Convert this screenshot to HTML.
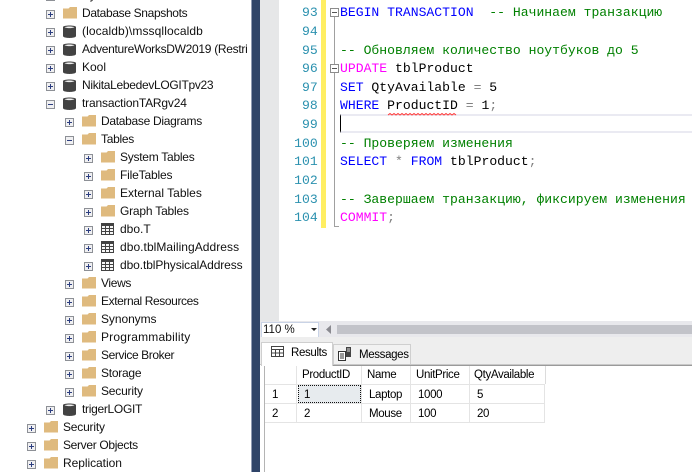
<!DOCTYPE html>
<html><head><meta charset="utf-8">
<style>
html,body{margin:0;padding:0;background:#fff}
#p{position:relative;width:692px;height:472px;overflow:hidden;background:#fff;font-family:"Liberation Sans",sans-serif;font-size:12px;color:#111}
#p div,#p span.a{position:absolute;white-space:pre}
.t{height:18px;line-height:18px}
.c{font-family:"Liberation Mono",monospace;font-size:13.1px;height:18px;line-height:18px;color:#000;left:340px;margin-top:1px}
.n{font-family:"Liberation Mono",monospace;font-size:13.1px;height:18px;line-height:18px;color:#2b91af;left:0;text-align:right;width:317.7px;margin-top:1px}
.k{color:#0000ff}.m{color:#ff00ff}.g{color:#008000}.o{color:#808080}
.h{font-size:11.5px;height:18px;line-height:18px;letter-spacing:-.35px;color:#000}
svg{position:absolute;overflow:visible}
</style></head><body><div id="p">
<svg width="0" height="0" style="left:0;top:0">
<defs>
<g id="pl" transform="translate(0,1)"><rect x=".5" y=".5" width="8" height="8" fill="#f0f0f2" stroke="#8d9096"/><path d="M2 4.5h5M4.5 2v5" stroke="#2c3e80" fill="none"/></g>
<g id="mi" transform="translate(0,1)"><rect x=".5" y=".5" width="8" height="8" fill="#f0f0f2" stroke="#8d9096"/><path d="M2 4.5h5" stroke="#2c3e80" fill="none"/></g>
<g id="fo"><path d="M0 2.5h5.5l1.5-1.5h7v11.5H0z" fill="#dfba7e"/></g>
<g id="db"><path d="M0 3C0 1 13 1 13 3V12C13 14.6 0 14.6 0 12z" fill="#424242"/><path d="M1.6 3.2C3.5 2.2 9.5 2.2 11.4 3.2 9.5 4.4 3.5 4.4 1.6 3.2z" fill="#f0f0f0"/></g>
<g id="tb"><rect x="0" y="0" width="13" height="12" fill="#424242"/><path d="M1 3h3v2H1zM5 3h3v2H5zM9 3h3v2H9zM1 6h3v2H1zM5 6h3v2H5zM9 6h3v2H9zM1 9h3v2H1zM5 9h3v2H5zM9 9h3v2H9z" fill="#f6f6f6"/></g>
</defs></svg>

<!-- tree: top remnant -->
<svg style="left:46px;top:-9px" width="9" height="9"><use href="#pl"/></svg>
<div class="t" style="left:82px;top:-14px;letter-spacing:-.3px">System Databases</div>

<svg style="left:46px;top:9px" width="9" height="9"><use href="#pl"/></svg><svg style="left:63px;top:6px" width="14" height="14"><use href="#fo"/></svg><div class="t" style="left:82px;top:4px;letter-spacing:-.34px">Database Snapshots</div>
<svg style="left:46px;top:27px" width="9" height="9"><use href="#pl"/></svg><svg style="left:63px;top:24px" width="14" height="14"><use href="#db"/></svg><div class="t" style="left:82px;top:22px;letter-spacing:.1px">(localdb)\mssqllocaldb</div>
<svg style="left:46px;top:45px" width="9" height="9"><use href="#pl"/></svg><svg style="left:63px;top:42px" width="14" height="14"><use href="#db"/></svg><div class="t" style="left:82px;top:40px;width:168px;overflow:hidden;letter-spacing:-.3px">AdventureWorksDW2019 (Restri</div>
<svg style="left:46px;top:63px" width="9" height="9"><use href="#pl"/></svg><svg style="left:63px;top:60px" width="14" height="14"><use href="#db"/></svg><div class="t" style="left:82px;top:58px">Kool</div>
<svg style="left:46px;top:81px" width="9" height="9"><use href="#pl"/></svg><svg style="left:63px;top:78px" width="14" height="14"><use href="#db"/></svg><div class="t" style="left:82px;top:76px;letter-spacing:-.31px">NikitaLebedevLOGITpv23</div>
<svg style="left:46px;top:99px" width="9" height="9"><use href="#mi"/></svg><svg style="left:63px;top:96px" width="14" height="14"><use href="#db"/></svg><div class="t" style="left:82px;top:94px;letter-spacing:-.17px">transactionTARgv24</div>

<svg style="left:65px;top:117px" width="9" height="9"><use href="#pl"/></svg><svg style="left:82px;top:114px" width="14" height="14"><use href="#fo"/></svg><div class="t" style="left:101px;top:112px;letter-spacing:-.3px">Database Diagrams</div>
<svg style="left:65px;top:135px" width="9" height="9"><use href="#mi"/></svg><svg style="left:82px;top:132px" width="14" height="14"><use href="#fo"/></svg><div class="t" style="left:101px;top:130px;letter-spacing:-.3px">Tables</div>

<svg style="left:84px;top:153px" width="9" height="9"><use href="#pl"/></svg><svg style="left:101px;top:150px" width="14" height="14"><use href="#fo"/></svg><div class="t" style="left:120px;top:148px;letter-spacing:-.26px">System Tables</div>
<svg style="left:84px;top:171px" width="9" height="9"><use href="#pl"/></svg><svg style="left:101px;top:168px" width="14" height="14"><use href="#fo"/></svg><div class="t" style="left:120px;top:166px;letter-spacing:-.17px">FileTables</div>
<svg style="left:84px;top:189px" width="9" height="9"><use href="#pl"/></svg><svg style="left:101px;top:186px" width="14" height="14"><use href="#fo"/></svg><div class="t" style="left:120px;top:184px">External Tables</div>
<svg style="left:84px;top:207px" width="9" height="9"><use href="#pl"/></svg><svg style="left:101px;top:204px" width="14" height="14"><use href="#fo"/></svg><div class="t" style="left:120px;top:202px;letter-spacing:-.2px">Graph Tables</div>
<svg style="left:84px;top:225px" width="9" height="9"><use href="#pl"/></svg><svg style="left:101px;top:223px" width="13" height="12"><use href="#tb"/></svg><div class="t" style="left:120px;top:220px">dbo.T</div>
<svg style="left:84px;top:243px" width="9" height="9"><use href="#pl"/></svg><svg style="left:101px;top:241px" width="13" height="12"><use href="#tb"/></svg><div class="t" style="left:120px;top:238px;letter-spacing:.05px">dbo.tblMailingAddress</div>
<svg style="left:84px;top:261px" width="9" height="9"><use href="#pl"/></svg><svg style="left:101px;top:259px" width="13" height="12"><use href="#tb"/></svg><div class="t" style="left:120px;top:256px;letter-spacing:-.1px">dbo.tblPhysicalAddress</div>

<svg style="left:65px;top:279px" width="9" height="9"><use href="#pl"/></svg><svg style="left:82px;top:276px" width="14" height="14"><use href="#fo"/></svg><div class="t" style="left:101px;top:274px;letter-spacing:-.35px">Views</div>
<svg style="left:65px;top:297px" width="9" height="9"><use href="#pl"/></svg><svg style="left:82px;top:294px" width="14" height="14"><use href="#fo"/></svg><div class="t" style="left:101px;top:292px;letter-spacing:-.4px">External Resources</div>
<svg style="left:65px;top:315px" width="9" height="9"><use href="#pl"/></svg><svg style="left:82px;top:312px" width="14" height="14"><use href="#fo"/></svg><div class="t" style="left:101px;top:310px;letter-spacing:-.07px">Synonyms</div>
<svg style="left:65px;top:333px" width="9" height="9"><use href="#pl"/></svg><svg style="left:82px;top:330px" width="14" height="14"><use href="#fo"/></svg><div class="t" style="left:101px;top:328px;letter-spacing:.18px">Programmability</div>
<svg style="left:65px;top:351px" width="9" height="9"><use href="#pl"/></svg><svg style="left:82px;top:348px" width="14" height="14"><use href="#fo"/></svg><div class="t" style="left:101px;top:346px;letter-spacing:-.4px">Service Broker</div>
<svg style="left:65px;top:369px" width="9" height="9"><use href="#pl"/></svg><svg style="left:82px;top:366px" width="14" height="14"><use href="#fo"/></svg><div class="t" style="left:101px;top:364px;letter-spacing:-.25px">Storage</div>
<svg style="left:65px;top:387px" width="9" height="9"><use href="#pl"/></svg><svg style="left:82px;top:384px" width="14" height="14"><use href="#fo"/></svg><div class="t" style="left:101px;top:382px;letter-spacing:-.2px">Security</div>

<svg style="left:46px;top:405px" width="9" height="9"><use href="#pl"/></svg><svg style="left:63px;top:402px" width="14" height="14"><use href="#db"/></svg><div class="t" style="left:82px;top:400px;letter-spacing:-.3px">trigerLOGIT</div>

<svg style="left:27px;top:423px" width="9" height="9"><use href="#pl"/></svg><svg style="left:44px;top:420px" width="14" height="14"><use href="#fo"/></svg><div class="t" style="left:63px;top:418px;letter-spacing:-.2px">Security</div>
<svg style="left:27px;top:441px" width="9" height="9"><use href="#pl"/></svg><svg style="left:44px;top:438px" width="14" height="14"><use href="#fo"/></svg><div class="t" style="left:63px;top:436px;letter-spacing:-.33px">Server Objects</div>
<svg style="left:27px;top:459px" width="9" height="9"><use href="#pl"/></svg><svg style="left:44px;top:456px" width="14" height="14"><use href="#fo"/></svg><div class="t" style="left:63px;top:454px;letter-spacing:-.05px">Replication</div>

<!-- splitter -->
<div style="left:251px;top:0;width:1px;height:472px;background:#8f9bb3"></div>
<div style="left:252px;top:0;width:8px;height:472px;background:#2f4468"></div>
<!-- editor margin -->
<div style="left:260px;top:0;width:19px;height:321px;background:#e6e7e8"></div>
<div style="left:321px;top:0;width:5px;height:228px;background:#ffee62"></div>

<div class="n" style="top:3px">93</div>
<div class="n" style="top:22px">94</div>
<div class="n" style="top:41px">95</div>
<div class="n" style="top:59px">96</div>
<div class="n" style="top:78px">97</div>
<div class="n" style="top:96px">98</div>
<div class="n" style="top:115px">99</div>
<div class="n" style="top:134px">100</div>
<div class="n" style="top:152px">101</div>
<div class="n" style="top:171px">102</div>
<div class="n" style="top:190px">103</div>
<div class="n" style="top:208px">104</div>

<!-- fold markers -->
<div style="left:330px;top:8px;width:9px;height:9px;box-sizing:border-box;border:1px solid #8c8c8c;background:#fff"></div>
<div style="left:332px;top:12px;width:5px;height:1px;background:#555"></div>
<div style="left:334px;top:17px;width:1px;height:47px;background:#a0a0a0"></div>
<div style="left:330px;top:64px;width:9px;height:9px;box-sizing:border-box;border:1px solid #8c8c8c;background:#fff"></div>
<div style="left:332px;top:68px;width:5px;height:1px;background:#555"></div>
<div style="left:334px;top:73px;width:1px;height:154px;background:#a0a0a0"></div>
<div style="left:334px;top:226px;width:5px;height:1px;background:#a0a0a0"></div>

<!-- current line -->
<div style="left:340px;top:114px;width:352px;height:19px;box-sizing:border-box;border-top:2px solid #eaeaf2;border-bottom:2px solid #eaeaf2;border-left:1px solid #000"></div>

<div class="c" style="top:3px"><span class="k">BEGIN TRANSACTION</span>  <span class="g">-- Начинаем транзакцию</span></div>
<div class="c" style="top:41px"><span class="g">-- Обновляем количество ноутбуков до 5</span></div>
<div class="c" style="top:59px"><span class="m">UPDATE</span> tblProduct</div>
<div class="c" style="top:78px"><span class="k">SET</span> QtyAvailable <span class="o">=</span> 5</div>
<div class="c" style="top:96px"><span class="k">WHERE</span> ProductID <span class="o">=</span> 1<span class="o">;</span></div>
<svg style="left:388px;top:113px" width="70" height="4"><path d="M0 2l2-1.5 2 1.5 2-1.5 2 1.5 2-1.5 2 1.5 2-1.5 2 1.5 2-1.5 2 1.5 2-1.5 2 1.5 2-1.5 2 1.5 2-1.5 2 1.5 2-1.5 2 1.5 2-1.5 2 1.5 2-1.5 2 1.5 2-1.5 2 1.5 2-1.5 2 1.5 2-1.5 2 1.5 2-1.5 2 1.5 2-1.5 2 1.5 2-1.5 2 1.5" fill="none" stroke="#ff3b3b" stroke-width="1"/></svg>
<div class="c" style="top:134px"><span class="g">-- Проверяем изменения</span></div>
<div class="c" style="top:152px"><span class="k">SELECT</span> <span class="o">*</span> <span class="k">FROM</span> tblProduct<span class="o">;</span></div>
<div class="c" style="top:190px"><span class="g">-- Завершаем транзакцию, фиксируем изменения</span></div>
<div class="c" style="top:208px"><span class="m">COMMIT</span><span class="o">;</span></div>

<!-- toolbar -->
<div style="left:260px;top:321px;width:432px;height:16px;background:#e8e8ec"></div>
<div style="left:261px;top:322px;width:58px;height:16px;box-sizing:border-box;background:#fff;border:1px solid #c9d3e6"></div>
<div class="h" style="left:263px;top:321px;letter-spacing:0;color:#111">110 %</div>
<svg style="left:311px;top:328px" width="7" height="4"><path d="M0 0h6L3 3z" fill="#222"/></svg>
<svg style="left:326px;top:325px" width="6" height="9"><path d="M5 0v9L0 4.5z" fill="#8a8a90"/></svg>
<div style="left:337px;top:325px;width:355px;height:9px;background:#c2c3c9"></div>

<!-- tabs -->
<div style="left:260px;top:337px;width:432px;height:27px;background:#eeeeee"></div>
<div style="left:260px;top:364px;width:432px;height:1px;background:#c8c8c8"></div>
<div style="left:264px;top:365px;width:428px;height:1px;background:#9a9a9a"></div>
<div style="left:260px;top:366px;width:432px;height:106px;background:#fff"></div>
<div style="left:264px;top:365px;width:1px;height:107px;background:#b4b4b4"></div>
<div style="left:333px;top:344px;width:78px;height:20px;box-sizing:border-box;border:1px solid #cfcfcf;border-bottom:none;background:#f2f2f2"></div>
<div style="left:261px;top:342px;width:72px;height:24px;box-sizing:border-box;border:1px solid #cfcfcf;border-bottom:none;background:#fff"></div>
<svg style="left:271px;top:346px" width="13" height="11"><path d="M.5.5h12v10H.5zM.5 3.5h12M.5 7h12M4.5 3.5v7M8.5 3.5v7" fill="#fff" stroke="#444"/></svg>
<div class="h" style="left:291px;top:344px">Results</div>
<svg style="left:338px;top:347px" width="14" height="14"><path d="M.5 4.5h7v9h-7zM2 7h4M2 9h4M2 11h4" fill="#fff" stroke="#333"/><rect x="8" y="0" width="5" height="10" fill="#444"/><path d="M9 2h3M9 4h3" stroke="#ddd"/></svg>
<div class="h" style="left:359px;top:346px">Messages</div>

<!-- grid -->
<div style="left:296px;top:366px;width:1px;height:56px;background:#e4e4e4"></div>
<div style="left:361px;top:366px;width:1px;height:56px;background:#e4e4e4"></div>
<div style="left:410px;top:366px;width:1px;height:56px;background:#e4e4e4"></div>
<div style="left:469px;top:366px;width:1px;height:56px;background:#e4e4e4"></div>
<div style="left:544px;top:384px;width:1px;height:38px;background:#e4e4e4"></div>
<div style="left:545px;top:366px;width:1px;height:18px;background:#dcdcdc"></div>
<div style="left:265px;top:384px;width:280px;height:1px;background:#e4e4e4"></div>
<div style="left:265px;top:403px;width:280px;height:1px;background:#e4e4e4"></div>
<div style="left:265px;top:422px;width:280px;height:1px;background:#e4e4e4"></div>
<div style="left:298px;top:385px;width:63px;height:18px;box-sizing:border-box;background:#e7ebee;border:1px dotted #111"></div>

<div class="h" style="left:302px;top:366px">ProductID</div>
<div class="h" style="left:367px;top:366px">Name</div>
<div class="h" style="left:416px;top:366px">UnitPrice</div>
<div class="h" style="left:470px;top:366px;left:474px">QtyAvailable</div>
<div class="h" style="left:272px;top:386px">1</div>
<div class="h" style="left:304px;top:386px">1</div>
<div class="h" style="left:369px;top:386px">Laptop</div>
<div class="h" style="left:418px;top:386px">1000</div>
<div class="h" style="left:477px;top:386px">5</div>
<div class="h" style="left:272px;top:405px">2</div>
<div class="h" style="left:304px;top:405px">2</div>
<div class="h" style="left:369px;top:405px">Mouse</div>
<div class="h" style="left:418px;top:405px">100</div>
<div class="h" style="left:477px;top:405px">20</div>
</div></body></html>
